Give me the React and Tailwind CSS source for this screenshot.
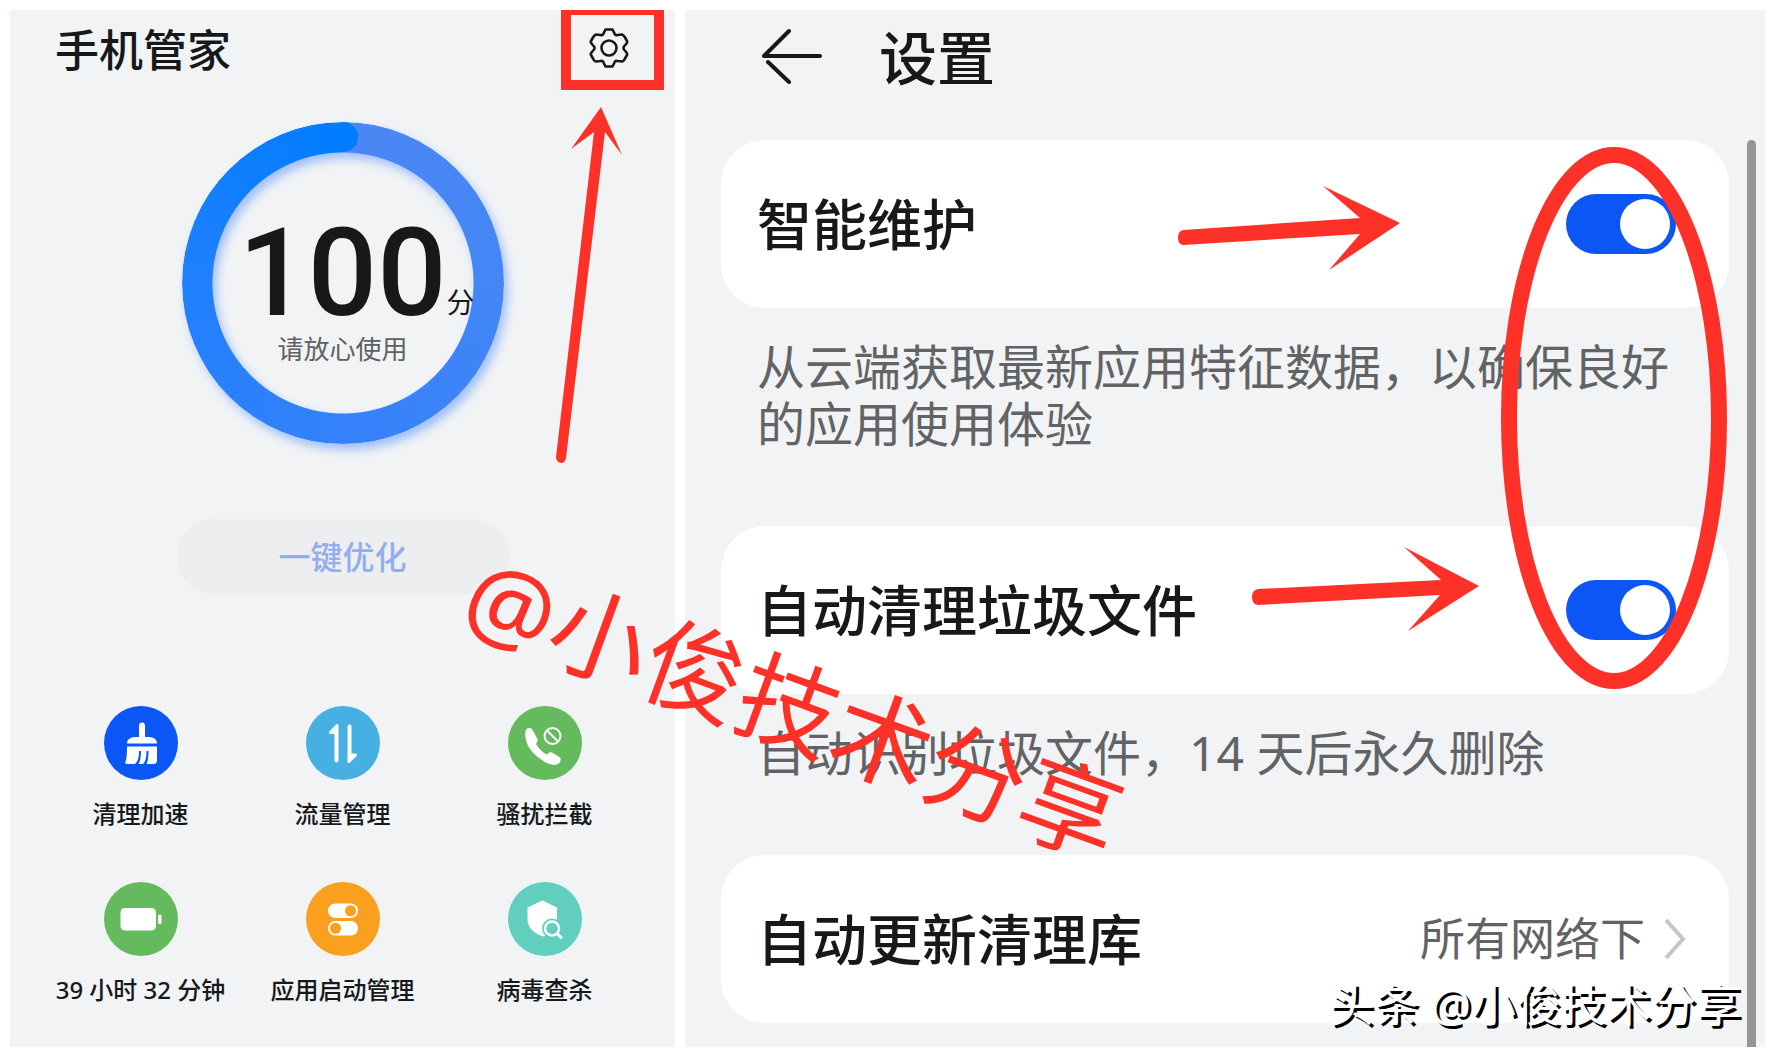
import { useState } from "react";

const ICONS = {
  broom: (
    <g fill="white">
      <path d="M35 19.500a3 3 0 0 1 6 0V31H45Q53 31.500 53 37.500H23Q23 31.500 31 31H35Z" />
      <path d="M23 40.500H53V54Q53 58 49.500 58H42.500Q44.500 54 44.500 45H42.500Q42.500 55 39 58H34.500Q37 54 37 45H35Q35 55 31 58H22Q20.500 58 22 54Q23 50 23 40.500Z" />
    </g>
  ),
  traffic: (
    <g fill="white">
      <path d="M28.500 24V54.500a2 2 0 0 0 4 0V19.500Q32.500 17 30 18.500L23.500 25.500Q22 28 25 28H28.500Z" />
      <path d="M45.500 49V20.500a2 2 0 0 0-4 0V55.500Q41.500 58 44 56.500L50.500 50Q52 47.500 49 47.500H45.500Z" />
    </g>
  ),
  block: (
    <g>
      <path fill="white" d="M17.500 24.500Q20 20.500 24 23L29.500 33Q30.500 34.500 28 38Q33 46 39 48.500Q41.500 45.500 44 46.500L51.500 51Q54 53 51.500 57Q46 61.500 37 56Q15 43 17.500 24.500Z" />
      <circle cx="44.500" cy="30" r="8" fill="none" stroke="white" strokeWidth="2" />
      <path d="M39 24.500L50 35.500" stroke="white" strokeWidth="2" />
    </g>
  ),
  battery: (
    <g fill="white">
      <rect x="16.500" y="26" width="35.500" height="22.500" rx="4.500" />
      <rect x="54" y="32.500" width="3.500" height="9.500" rx="1.500" />
    </g>
  ),
  toggles: (
    <g>
      <rect x="22" y="21.500" width="30" height="14.500" rx="7.250" fill="white" />
      <circle cx="44.500" cy="28.750" r="5.500" fill="#fa9f1e" />
      <rect x="22" y="39" width="30" height="14.500" rx="7.250" fill="white" />
      <circle cx="29.500" cy="46.250" r="5.500" fill="#fa9f1e" />
    </g>
  ),
  shield: (
    <g>
      <path fill="white" d="M34.500 18.500L49 25.500V38Q49 50 35 54.500Q19.500 49 19.500 37V25.500Z" />
      <circle cx="44" cy="46.500" r="10" fill="#61cfbd" />
      <circle cx="44" cy="46.500" r="7" fill="#61cfbd" stroke="white" strokeWidth="2.500" />
      <path d="M49.500 52L53 55.500" stroke="white" strokeWidth="3" strokeLinecap="round" />
    </g>
  ),
};

const TOOLS = [
  { icon: "broom", label: "清理加速", bg: "bg-[#0b56f5]" },
  { icon: "traffic", label: "流量管理", bg: "bg-[#46b0e3]" },
  { icon: "block", label: "骚扰拦截", bg: "bg-[#64ba5c]" },
  { icon: "battery", label: "39 小时 32 分钟", bg: "bg-[#64ba5c]" },
  { icon: "toggles", label: "应用启动管理", bg: "bg-[#fa9f1e]" },
  { icon: "shield", label: "病毒查杀", bg: "bg-[#61cfbd]" },
];

function ScoreRing() {
  return (
    <div className="relative mx-auto size-[322px] shrink-0">
      <div className="absolute inset-0 drop-shadow-[4px_6px_5px_rgba(60,130,255,0.45)]">
        <div className="size-full rounded-full bg-[conic-gradient(#4c87f3_0%,#4386f6_25%,#3581fb_50%,#2080fd_75%,#007dff_100%)] mask-[radial-gradient(closest-side,transparent_130px,black_131px)]" />
        <div className="absolute left-1/2 top-0 h-[30px] w-[15px] rounded-r-full bg-[#007dff]" />
      </div>
      <div className="relative flex h-full flex-col items-center pt-[95px] text-[#17181a]">
        <p className="relative font-['Roboto','Noto_Sans_CJK_SC',sans-serif] text-[122px] leading-[114px] font-medium">
          100
          <span className="absolute bottom-0 left-full text-[28px] leading-[54px] font-normal">分</span>
        </p>
        <p className="text-[26px] leading-[36px] text-[#5f6062]">请放心使用</p>
      </div>
    </div>
  );
}

function ManagerPanel() {
  return (
    <section className="flex flex-[665] flex-col bg-[#f1f3f5] text-[#17181a]">
      <header className="flex items-start justify-between pr-[11px] pl-[45px]">
        <h1 className="pt-[8px] text-[44px] leading-[64px] font-medium">手机管家</h1>
        <button
          aria-label="设置"
          className="flex h-[80px] w-[103px] items-center justify-center border-x-10 border-t-5 border-b-10 border-[#fd3127] pr-[8px]"
        >
          <svg viewBox="0 0 40 40" className="size-[40px]" fill="none" stroke="#17181a" strokeWidth="2.600" strokeLinejoin="round">
            <path d="M16.500 1.500H23.500L26 6.500Q27 7.500 28.500 7L33 6.500Q34.500 7 36 9.500L38 13Q38.500 14.500 37.500 15.500L35 18.500Q34 20 35 21.500L37.500 24.500Q38.500 26 38 27L36 30.500Q34.500 33.500 33 33.500L28.500 33Q27 32.500 26 33.500L23.500 38.500H16.500L14 33.500Q13 32.500 11.500 33L7 33.500Q5.500 33.500 4 30.500L2 27Q1.500 26 2.500 24.500L5 21.500Q6 20 5 18.500L2.500 15.500Q1.500 14.500 2 13L4 9.500Q5.500 7 7 6.500L11.500 7Q13 7.500 14 6.500Z" />
            <circle cx="20" cy="20" r="7.500" />
          </svg>
        </button>
      </header>

      <div className="mt-[32px]">
        <ScoreRing />
      </div>

      <button className="mx-auto mt-[75px] h-[75px] w-[332px] shrink-0 rounded-[36px] bg-[#edeeef] text-[32px] leading-[48px] font-medium text-[#94adee]">
        一键优化
      </button>

      {/* Tools */}
      <div className="mx-auto mt-[112px] grid w-[606px] grid-cols-3 gap-y-[48px]">
        {TOOLS.map((t) => (
          <button key={t.label} className="flex flex-col items-center gap-[14px]">
            <span className={`size-[74px] rounded-full ${t.bg}`}>
              <svg viewBox="0 0 74 74" className="size-full">
                {ICONS[t.icon]}
              </svg>
            </span>
            <span className="text-[24px] leading-[40px] font-medium whitespace-nowrap">{t.label}</span>
          </button>
        ))}
      </div>
    </section>
  );
}

function Switch({ id }) {
  const [on, setOn] = useState(true);
  return (
    <input
      id={id}
      type="checkbox"
      role="switch"
      checked={on}
      onChange={() => setOn(!on)}
      className="flex h-[60px] w-[110px] shrink-0 appearance-none items-center rounded-full bg-gray-300 px-[6px] before:size-[50px] before:rounded-full before:bg-white checked:justify-end checked:bg-[#0b56f5]"
    />
  );
}

function SwitchCard({ id, label, note }) {
  return (
    <div>
      <div className="flex h-[168px] items-center justify-between rounded-[44px] bg-white pr-[53px] pl-[36px]">
        <label htmlFor={id} className="text-[55px] leading-[80px] font-medium">
          {label}
        </label>
        <Switch id={id} />
      </div>
      <p className="mt-[30px] mb-[74px] pr-[53px] pl-[36px] text-[48px] leading-[57px] text-[#626365]">{note}</p>
    </div>
  );
}

function SettingsPanel() {
  return (
    <section className="flex flex-[1080] flex-col bg-[#f1f3f5] text-[#17181a]">
      <header className="flex h-[130px] items-start gap-[56px] pt-[8px] pl-[76px]">
        <button aria-label="返回" className="flex h-[76px] items-center">
          <svg viewBox="0 0 62 56" className="h-[56px] w-[62px]" fill="none" stroke="#17181a" strokeWidth="4" strokeLinecap="round" strokeLinejoin="round">
            <path d="M28 3L3 28H59" />
            <path d="M7 34L28 54" />
          </svg>
        </button>
        <h2 className="text-[58px] leading-[80px] font-medium">设置</h2>
      </header>

      <div className="flex flex-1 items-stretch">
        <div className="flex-1 pr-[18px] pl-[36px]">
          <SwitchCard id="smart" label="智能维护" note="从云端获取最新应用特征数据，以确保良好的应用使用体验" />
          <SwitchCard id="clean" label="自动清理垃圾文件" note="自动识别垃圾文件，14 天后永久删除" />
          <button className="flex h-[168px] w-full items-center rounded-[44px] bg-white pr-[42px] pl-[36px]">
            <span className="flex-1 text-left text-[55px] leading-[80px] font-medium">自动更新清理库</span>
            <span className="text-[45px] leading-[64px] text-[#626365]">所有网络下</span>
            <svg viewBox="0 0 24 42" className="ml-[18px] h-[42px] w-[24px]" fill="none" stroke="#c5c6c8" strokeWidth="4">
              <path d="M3 2L20 21L3 40" />
            </svg>
          </button>
        </div>
        <div className="mr-[9px] w-[9px] rounded-t-full bg-[#939597]" />
      </div>
    </section>
  );
}

function Annotations() {
  return (
    <svg
      viewBox="0 0 1775 1058"
      preserveAspectRatio="none"
      className="pointer-events-none absolute inset-0 size-full"
      fill="#fd3127"
    >
      <path d="M601 107L622 155L605 132L566 458Q565 463 561 463Q556 462 556 457L594 132L571 149Z" />
      <path d="M1400 223L1329 270L1360 234L1183 245Q1178 244 1178 238Q1178 231 1183 230L1360 218L1323 186Z" />
      <path d="M1479 586L1408 631L1440 595L1258 605Q1252 604 1252 597Q1252 590 1258 589L1441 580L1404 547Z" />
      <ellipse cx="1614" cy="418" rx="105" ry="263" fill="none" stroke="#fd3127" strokeWidth="16" />
    </svg>
  );
}

export default function App() {
  return (
    <main
      lang="zh-CN"
      className="relative flex min-h-screen gap-[10px] overflow-hidden bg-white px-[10px] pt-[10px] pb-[11px] font-['Noto_Sans','Noto_Sans_CJK_SC',sans-serif]"
    >
      <ManagerPanel />
      <SettingsPanel />
      <Annotations />
      <p className="pointer-events-none absolute top-[706px] left-[794px] -translate-x-1/2 -translate-y-1/2 rotate-20 text-[100px] leading-none whitespace-nowrap text-[#fd3127]">
        @小俊技术分享
      </p>
      <p className="pointer-events-none absolute right-[34px] bottom-[20px] text-[45px] leading-[66px] whitespace-nowrap text-white [text-shadow:3px_3px_0_black]">
        头条 @小俊技术分享
      </p>
    </main>
  );
}
